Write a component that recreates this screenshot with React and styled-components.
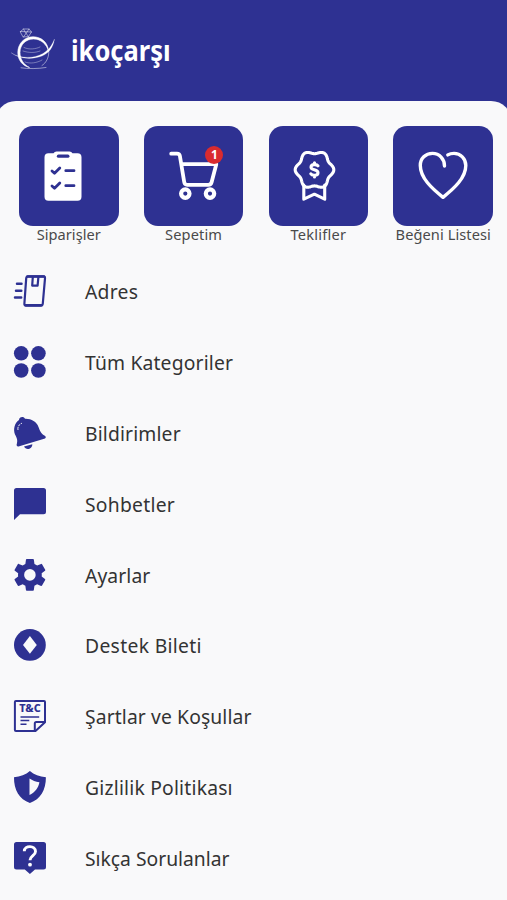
import React from 'react';
import styled, { createGlobalStyle } from 'styled-components'

const navy = "#2e3192";
const paper = "#f9f9fa";

const GlobalStyle = createGlobalStyle`
    * {
        box-sizing: border-box;
    }
    body {
        margin: 0;
        background-color: ${paper};
        font-family: "Noto Sans", "Open Sans", sans-serif;
    }
`
const Container = styled.div`
    width: 100%;
    height: 900px;
    overflow: hidden;
    display: flex;
    flex-direction: column;
    background-color: ${navy};
`
const Header = styled.header`
    flex: none;
    height: 101px;
    display: flex;
    align-items: center;
    gap: 13px;
    padding: 0 0 4px 10px;
`
const Title = styled.h1`
    margin: 2px 0 0;
    font-size: 28px;
    line-height: 40px;
    font-weight: 700;
    color: white;
    transform: scaleX(0.91);
    transform-origin: left;
`
const Sheet = styled.main`
    flex: 1;
    margin: 0 -5px;
    padding: 25px 19px 0 24px;
    border-radius: 21px 21px 0 0;
    background-color: ${paper};
`
const Shortcuts = styled.nav`
    display: flex;
    justify-content: space-between;
    height: 130px;
`
const Shortcut = styled.a`
    width: 99.5px;
    display: flex;
    flex-direction: column;
    align-items: center;
`
const Tile = styled.div`
    position: relative;
    flex: none;
    width: 100%;
    height: 99.5px;
    display: flex;
    align-items: center;
    justify-content: center;
    border-radius: 14px;
    background-color: ${navy};
`
const Badge = styled.span`
    position: absolute;
    top: 20px;
    right: 20px;
    width: 18px;
    height: 18px;
    border-radius: 50%;
    background-color: #d92b2f;
    color: white;
    font-size: 12px;
    line-height: 18px;
    font-weight: 700;
    text-align: center;
`
const Caption = styled.span`
    margin-top: -1px;
    font-size: 14.6px;
    line-height: 18px;
    white-space: nowrap;
    color: #4a4a4a;
    letter-spacing: ${props => props.$spacing || 0}px;
`
const Menu = styled.ul`
    margin: 0;
    padding: 0;
    list-style: none;
`
const MenuItem = styled.li`
    height: 70.8px;
    display: flex;
    align-items: center;
    gap: 39px;
`
const MenuIcon = styled.svg`
    flex: none;
    width: 32px;
    height: 32px;
    margin-left: -5px;
    overflow: visible;
`
const MenuText = styled.span`
    padding-top: 2px;
    font-size: 19.3px;
    line-height: 28px;
    white-space: nowrap;
    color: #333;
    letter-spacing: ${props => props.$spacing || 0}px;
`

// wavy outline of the offer seal, six lobes
const sealPath = (cx, cy, r, wave) => {
  const points = [];
  for (let i = 0; i < 120; i++) {
    const t = (i / 120) * Math.PI * 2;
    const d = r + wave * Math.cos(6 * t);
    points.push(`${(cx + d * Math.cos(t)).toFixed(2)} ${(cy + d * Math.sin(t)).toFixed(2)}`);
  }
  return `M${points.join("L")}Z`;
};

const Logo = () => (
  <svg width="48" height="48" viewBox="10 24 48 48" fill="none" stroke="white" strokeLinecap="round">
    <path d="M48.5 50C48 41 41 35.8 33 35.8C24 35.8 17.8 43 17.8 51.5C17.8 59.5 23 65 29.5 66.5C23.5 63.5 20 58 20 51.5C20 43.5 26 38 33.5 38C41 38 46.5 43 48.5 50Z" fill="white" strokeWidth="0.6" />
    <path d="M48.8 51C48.8 57 46 62 42 64.5" strokeWidth="0.7" opacity="0.7" />
    <path d="M11.5 52C20 57.5 33 58 43 52.5C49 49 52 44 54.5 38C53 47 49 52 42 55C32 59 19 58 11.5 52Z" fill="white" strokeWidth="0.2" />
    <path d="M24 46.5C29 49 36 48 40 46M23 50C29 52 35 52 40 50M25 61C30 63 37 62 42 59" strokeWidth="0.7" opacity="0.5" />
    <path d="M21 66.8C28 68 38 67.8 46 66.5" strokeWidth="0.7" opacity="0.7" />
    <path d="M20.5 30.5L23.5 28L29 28L31.5 31L28.5 35.5L23.5 36ZM20.5 30.5L31.5 31M23.5 28L25 31L28.5 35.5M29 28L27 31L23.5 36" strokeWidth="0.7" opacity="0.7" />
  </svg>
)

const OrdersIcon = () => (
  <svg width="50" height="50" viewBox="0 0 50 50">
    <path d="M4.5 2.3H9.5Q10.5 0.4 12.5 0.4H25.5Q27.5 0.4 28.5 2.3H33.5Q37.5 2.3 37.5 6.3V45.7Q37.5 49.7 33.5 49.7H4.5Q0.5 49.7 0.5 45.7V6.3Q0.5 2.3 4.5 2.3Z" fill="white" />
    <g fill="none" stroke={navy} strokeWidth="2.8" strokeLinecap="round" strokeLinejoin="round">
      <path d="M14.5 5.2H23.8" strokeWidth="3.3" />
      <path d="M8 20L10.5 22.3L15.8 17M21.8 19.7H30" />
      <path d="M8 35L10.5 37.3L15.8 32M21.8 34.7H30" />
    </g>
  </svg>
)

const CartIcon = () => (
  <svg width="50" height="50" viewBox="0 0 50 50" fill="none" stroke="white" strokeWidth="3.8" strokeLinecap="round" strokeLinejoin="round">
    <path d="M2.2 2.7H8Q10.5 2.7 10.9 5L15.2 31Q15.7 33.8 18.2 33.8H39.3Q42 33.8 42.6 31.3L47.3 13.2H12.7" />
    <circle cx="16.3" cy="42.6" r="4.2" strokeWidth="4.2" />
    <circle cx="41" cy="42.6" r="4.2" strokeWidth="4.2" />
  </svg>
)

const OffersIcon = () => (
  <svg width="50" height="50" viewBox="0 0 50 50" fill="none" stroke="white" strokeWidth="3.1" strokeLinecap="round" strokeLinejoin="round">
    <path d={sealPath(21.5, 18.8, 17.7, 1.6)} />
    <path d="M10.8 34V48.2L21.4 43.2L31.7 48.2V34" />
    <path d="M25 14.8C24 13.3 18 12.8 18 16.2C18 19.6 25 18 25 21.7C25 25 19 24.8 17.8 22.8M21.5 11.8V13.5M21.5 24.5V26" />
  </svg>
)

const HeartIcon = () => (
  <svg width="50" height="50" viewBox="0 0 50 50" fill="none" stroke="white" strokeWidth="3.4" strokeLinecap="round" strokeLinejoin="round">
    <path d="M26.5 15C26.5 8 21.5 2.4 14.5 2.4C7.5 2.4 2.3 7.5 2.3 14.5C2.3 27 14 37.5 25 46.3C36 37.5 47.8 27 47.8 14.5C47.8 7.5 42.5 2.4 36 2.4C33.5 2.4 31.5 2.9 29.8 3.9" />
  </svg>
)

const shortcuts = [
  { label: "Siparişler", icon: <OrdersIcon />, spacing: 0.03 },
  { label: "Sepetim", icon: <CartIcon />, spacing: 0.15, badge: 1 },
  { label: "Teklifler", icon: <OffersIcon />, spacing: 0.25 },
  { label: "Beğeni Listesi", icon: <HeartIcon />, spacing: 0.08 },
];

const menu = [
  {
    label: "Adres",
    spacing: 0.25,
    icon: (
      <g fill="none" stroke={navy} strokeWidth="2.2" strokeLinecap="round" strokeLinejoin="round">
        <path d="M14.2 1.3H29.2Q31.2 1.3 31 3.3L28.8 28.5Q28.6 30.7 26.6 30.7H12.2Q10.2 30.7 10.4 28.5L12.2 3.3Q12.4 1.3 14.2 1.3Z" />
        <path d="M13.5 1.5H30M11.5 30.2H27.5" strokeWidth="2.6" />
        <path d="M18.8 2L18.2 10.6H23.6L24.4 2" />
        <path d="M3 8.8H7.5M2 15.8H7.3M1 22.5H7.2" strokeWidth="2.5" />
      </g>
    ),
  },
  {
    label: "Tüm Kategoriler",
    spacing: 0.17,
    icon: (
      <g fill={navy}>
        <circle cx="7.2" cy="7.3" r="7.3" />
        <circle cx="24.4" cy="7.3" r="7.3" />
        <circle cx="7.2" cy="24.5" r="7.3" />
        <circle cx="24.4" cy="24.5" r="7.3" />
      </g>
    ),
  },
  {
    label: "Bildirimler",
    spacing: 0.15,
    icon: (
      <>
        <path d="M5 3C5 -0.5 10 -1 11 1.8C17 1.5 22.5 4.5 24.5 10C26 14.5 27.5 17 31.3 19Q32.5 20.5 31 21.5L4.5 29.5Q2.5 29.8 2.6 27.8C4 23.5 3 21 1 17.5C-1 12.5 0.5 6 5 3Z" fill={navy} />
        <path d="M10 29.6L18.3 27.2C18.5 32 12 33.8 10 29.6Z" fill={navy} />
        <path d="M4 13C3.4 9.8 5 7.3 8 6.2" fill="none" stroke={paper} strokeWidth="0.9" strokeDasharray="3 0.8" />
      </>
    ),
  },
  {
    label: "Sohbetler",
    spacing: 0.27,
    icon: <path d="M2.5 0H29.5Q32 0 32 2.5V23.7Q32 26.2 29.5 26.2H6L0 32V2.5Q0 0 2.5 0Z" fill={navy} />,
  },
  {
    label: "Ayarlar",
    spacing: 0.1,
    icon: (
      <path transform="translate(-3.9 -3.9) scale(1.65)" fillRule="evenodd" fill={navy} d="M19.14 12.94c.04-.3.06-.61.06-.94 0-.32-.02-.64-.07-.94l2.03-1.58a.49.49 0 0 0 .12-.61l-1.92-3.32a.488.488 0 0 0-.59-.22l-2.39.96c-.5-.38-1.03-.7-1.62-.94l-.36-2.54a.484.484 0 0 0-.48-.41h-3.84c-.24 0-.43.17-.47.41l-.36 2.54c-.59.24-1.13.57-1.62.94l-2.39-.96c-.22-.08-.47 0-.59.22L2.74 8.87c-.12.21-.08.47.12.61l2.03 1.58c-.05.3-.09.63-.09.94s.02.64.07.94l-2.03 1.58a.49.49 0 0 0-.12.61l1.92 3.32c.12.22.37.29.59.22l2.39-.96c.5.38 1.03.7 1.62.94l.36 2.54c.05.24.24.41.48.41h3.84c.24 0 .44-.17.47-.41l.36-2.54c.59-.24 1.13-.56 1.62-.94l2.39.96c.22.08.47 0 .59-.22l1.92-3.32c.12-.22.07-.47-.12-.61l-2.01-1.58zM12 15.5a3.5 3.5 0 1 1 0-7a3.5 3.5 0 0 1 0 7z" />
    ),
  },
  {
    label: "Destek Bileti",
    spacing: 0.33,
    icon: (
      <>
        <circle cx="15.9" cy="15.9" r="15.9" fill={navy} />
        <path d="M15.9 7L22.8 15.9L15.9 24.8L9 15.9Z" fill={paper} />
      </>
    ),
  },
  {
    label: "Şartlar ve Koşullar",
    spacing: 0.12,
    icon: (
      <>
        <g fill="none" stroke={navy} strokeWidth="2" strokeLinejoin="round">
          <path d="M1.9 0.9H30Q31 0.9 31 1.9V22.3L21.5 31H1.9Q0.9 31 0.9 30V1.9Q0.9 0.9 1.9 0.9Z" />
          <path d="M20.8 30.5V23.5Q20.8 22 22.3 22H31" />
          <path d="M6.5 17H25.2M6.5 20.6H15.3M6.5 24.2H12.5" strokeWidth="1.5" />
        </g>
        <text x="15.9" y="12.3" textAnchor="middle" textLength="21.5" lengthAdjust="spacingAndGlyphs" fontSize="10" fontWeight="800" fill={navy}>T&amp;C</text>
      </>
    ),
  },
  {
    label: "Gizlilik Politikası",
    spacing: 0.21,
    icon: (
      <>
        <path d="M15.9 0C20 3.5 25.5 5.8 31.9 6.2C32 19 26.5 28 15.9 32C5.3 28 -0.2 19 0 6.2C6.3 5.8 11.8 3.5 15.9 0Z" fill={navy} />
        <path d="M15.5 7.5C18.5 9.5 21.5 10.8 25.4 11.3C24.5 17 21 21.5 15.5 24Z" fill={paper} />
      </>
    ),
  },
  {
    label: "Sıkça Sorulanlar",
    spacing: 0,
    icon: (
      <>
        <path d="M2.5 0H29.5Q32 0 32 2.5V25Q32 27.5 29.5 27.5H21L15.9 32L10.8 27.5H2.5Q0 27.5 0 25V2.5Q0 0 2.5 0Z" fill={navy} />
        <path d="M10.3 9.3C10.5 3 21.5 3 21.5 9.5C21.5 13.5 16 13.8 16 18.3" fill="none" stroke="white" strokeWidth="2.9" />
        <circle cx="16" cy="22.7" r="1.9" fill="white" />
      </>
    ),
  },
];

const App = () => {
  return (
    <Container>
      <GlobalStyle/>
      <Header>
        <Logo/>
        <Title>ikoçarşı</Title>
      </Header>
      <Sheet>
        <Shortcuts>
          {shortcuts.map((item) => (
            <Shortcut key={item.label}>
              <Tile>
                {item.icon}
                {item.badge && <Badge>{item.badge}</Badge>}
              </Tile>
              <Caption $spacing={item.spacing}>{item.label}</Caption>
            </Shortcut>
          ))}
        </Shortcuts>
        <Menu>
          {menu.map((item) => (
            <MenuItem key={item.label}>
              <MenuIcon viewBox="0 0 32 32">{item.icon}</MenuIcon>
              <MenuText $spacing={item.spacing}>{item.label}</MenuText>
            </MenuItem>
          ))}
        </Menu>
      </Sheet>
    </Container>
  )
}

export default App
